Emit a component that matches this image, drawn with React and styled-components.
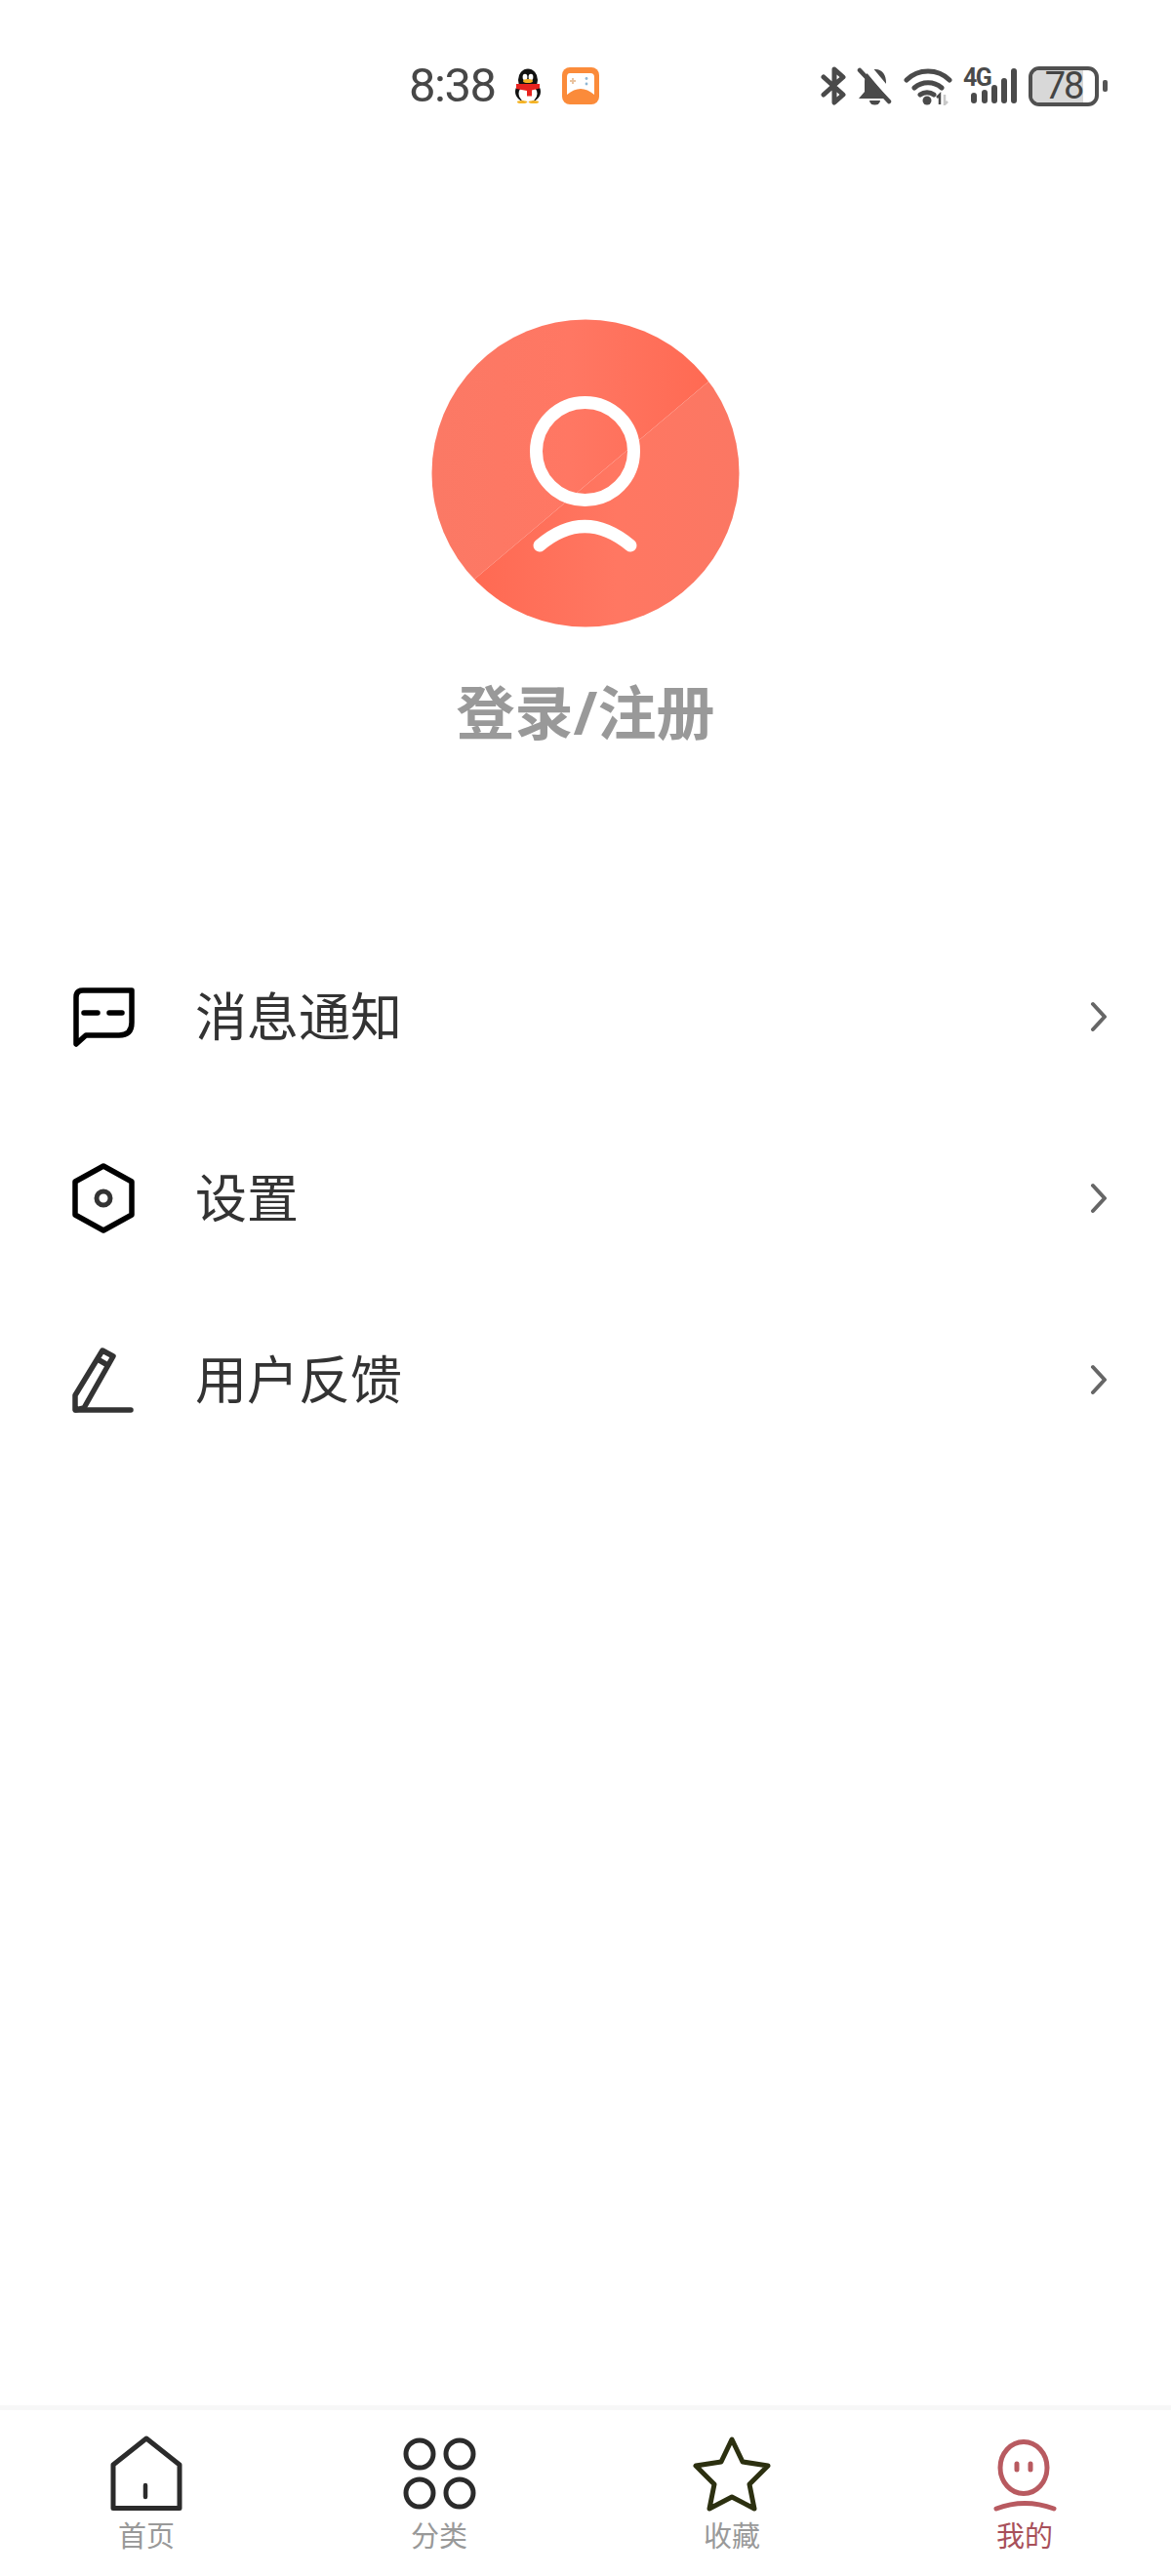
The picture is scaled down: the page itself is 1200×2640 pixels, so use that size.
import React from 'react';
import styled, { createGlobalStyle } from 'styled-components';

const GlobalStyle = createGlobalStyle`
  html, body {
    margin: 0;
    padding: 0;
    background: #ffffff;
  }
`;

const cjk = `'Noto Sans CJK SC', 'Noto Sans', sans-serif`;

const Page = styled.div`
  display: flex;
  flex-direction: column;
  width: 1200px;
  height: 2640px;
  overflow: hidden;
  background: #ffffff;
  font-family: ${cjk};
`;

const StatusBar = styled.div`
  display: flex;
  align-items: center;
  justify-content: space-between;
  box-sizing: border-box;
  height: 40px;
  margin-top: 68px;
  padding: 0 65px 0 419px;
`;

const StatusGroup = styled.div`
  display: flex;
  align-items: center;
`;

const Time = styled.span`
  font-family: Roboto, sans-serif;
  font-size: 49px;
  line-height: 40px;
  letter-spacing: -1.5px;
  color: #474747;
  margin-right: 18px;
`;

const StatusIcon = styled.svg`
  display: block;
  flex: none;
  margin-right: ${(p) => p.$gap || 0}px;
`;

const Battery = styled.div`
  position: relative;
  box-sizing: border-box;
  width: 72px;
  height: 41px;
  border: 4px solid #505050;
  border-radius: 11px;
  margin-right: 4px;
`;

const BatteryFill = styled.div`
  height: 100%;
  width: 82%;
  border-radius: 7px 0 0 7px;
  background: #d8d8d8;
`;

const BatteryLabel = styled.span`
  position: absolute;
  inset: -6px 0;
  display: flex;
  align-items: center;
  justify-content: center;
  font-family: Roboto, sans-serif;
  font-size: 38px;
  line-height: 45px;
  letter-spacing: -2px;
  color: #444444;
`;

const BatteryNub = styled.div`
  width: 5px;
  height: 12px;
  border-radius: 2px;
  background: #555555;
`;

const Profile = styled.div`
  display: flex;
  flex-direction: column;
  align-items: center;
  margin-top: 219px;
`;

const Title = styled.div`
  margin-top: 51px;
  font-family: 'Open Sans', ${cjk};
  font-size: 60px;
  line-height: 72px;
  font-weight: 700;
  color: #999999;
`;

const Menu = styled.div`
  display: flex;
  flex-direction: column;
  margin-top: 183px;
`;

const MenuRow = styled.div`
  display: flex;
  align-items: center;
  height: 186px;
  padding: 0 66px 0 72px;
`;

const MenuIcon = styled.svg`
  display: block;
  flex: none;
  width: 68px;
  height: 76px;
  margin-right: 60px;
`;

const MenuLabel = styled.span`
  flex: 1;
  font-size: 53px;
  line-height: 60px;
  color: #333333;
  margin-top: -6px;
`;

const Chevron = styled.svg`
  display: block;
  flex: none;
  width: 20px;
  height: 34px;
`;

const TabBar = styled.div`
  display: grid;
  grid-template-columns: repeat(4, 1fr);
  margin-top: auto;
  height: 175px;
  box-sizing: border-box;
  border-top: 5px solid #f7f7f7;
  padding-top: 25px;
`;

const Tab = styled.div`
  display: flex;
  flex-direction: column;
  align-items: center;
`;

const TabIcon = styled.svg`
  display: block;
  width: 84px;
  height: 80px;
`;

const TabLabel = styled.span`
  margin-top: 6px;
  font-size: 29px;
  line-height: 32px;
  color: ${(p) => (p.$active ? '#a8505a' : '#999999')};
`;

function Penguin() {
  return (
    <StatusIcon width="32" height="36" viewBox="0 0 32 36" $gap={19}>
      <ellipse cx="16" cy="24" rx="13" ry="11" fill="#111" />
      <ellipse cx="16" cy="12" rx="10" ry="11.5" fill="#111" />
      <ellipse cx="16" cy="26" rx="9.5" ry="9" fill="#fff" />
      <ellipse cx="13" cy="9" rx="2.4" ry="3.2" fill="#fff" />
      <ellipse cx="19" cy="9" rx="2.4" ry="3.2" fill="#fff" />
      <ellipse cx="16" cy="13" rx="5" ry="2" fill="#f5b324" />
      <path d="M4 16h24v4.5l-8 2v6h-5v-5.5L4 21z" fill="#e8231f" />
      <ellipse cx="10" cy="34.5" rx="5" ry="1.5" fill="#f5b324" />
      <ellipse cx="22" cy="34.5" rx="5" ry="1.5" fill="#f5b324" />
    </StatusIcon>
  );
}

function GameBadge() {
  return (
    <StatusIcon width="38" height="38" viewBox="0 0 38 38">
      <rect width="38" height="38" rx="8" fill="#fb8b3a" />
      <path d="M8 6H29q4 0 4 4V28q-7-6-14-6T5 28V10q0-4 3-4z" fill="#fff" />
      <path d="M8 14h6M11 11v6" stroke="#e9c3a0" strokeWidth="2" />
      <circle cx="25" cy="11.5" r="1.4" fill="#8fb7d6" />
      <circle cx="25" cy="17" r="1.4" fill="#8fb7d6" />
    </StatusIcon>
  );
}

function StatusIcons() {
  return (
    <StatusGroup>
      <StatusIcon width="26" height="40" viewBox="0 0 26 40" $gap={11}>
        <path d="M3 11l20 18-9 8V3l9 8L3 29" fill="none" stroke="#4a4a4a" strokeWidth="5" strokeLinecap="round" strokeLinejoin="round" />
      </StatusIcon>
      <StatusIcon width="37" height="40" viewBox="0 0 37 40" $gap={11}>
        <path d="M19 3c-8 0-11 7-11 13v10l-6 7h32l-4-7V16c0-6-3-13-11-13z" fill="#4a4a4a" />
        <path d="M13 35h11a5.5 4.5 0 0 1-11 0z" fill="#4a4a4a" />
        <path d="M9-1l30 36" stroke="#fff" strokeWidth="8" />
        <path d="M3 4l30 32" stroke="#4a4a4a" strokeWidth="4.5" strokeLinecap="round" />
      </StatusIcon>
      <StatusIcon width="50" height="40" viewBox="0 0 50 40" $gap={11}>
        <path d="M3 14c12-12 32-12 44 0M11 22c8-7 20-7 28 0M17 29c4-3 10-3 14 0" fill="none" stroke="#4a4a4a" strokeWidth="5" strokeLinecap="round" />
        <circle cx="24" cy="35" r="4.5" fill="#4a4a4a" />
        <path d="M37 39v-10l-3 3" fill="none" stroke="#4a4a4a" strokeWidth="2.5" />
        <path d="M42 29v10l3-3" fill="none" stroke="#c8c8c8" strokeWidth="2.5" />
      </StatusIcon>
      <StatusIcon width="56" height="62" viewBox="0 -12 56 62" $gap={11}>
        <text x="0" y="19" fontFamily="Roboto, sans-serif" fontSize="25" fontWeight="700" letterSpacing="-1.5" fill="#4a4a4a">4G</text>
        <path d="M11 29v5M22 26v8M32 21v13M42 14v20M52 4v30" fill="none" stroke="#4a4a4a" strokeWidth="6" strokeLinecap="round" />
      </StatusIcon>
      <Battery>
        <BatteryFill />
        <BatteryLabel>78</BatteryLabel>
      </Battery>
      <BatteryNub />
    </StatusGroup>
  );
}

function Avatar() {
  return (
    <svg width="316" height="316" viewBox="0 0 316 316" style={{ display: 'block' }}>
      <defs>
        <clipPath id="avatarClip">
          <circle cx="158" cy="158" r="157.5" />
        </clipPath>
        <linearGradient id="avatarTop" x1="0" x2="1" y1="0" y2="0">
          <stop offset="0" stopColor="#fb7965" />
          <stop offset="0.45" stopColor="#ff7763" />
          <stop offset="0.9" stopColor="#ff6a53" />
        </linearGradient>
        <linearGradient id="avatarBottom" x1="0" x2="1" y1="0" y2="0">
          <stop offset="0.15" stopColor="#ff6a53" />
          <stop offset="0.6" stopColor="#ff7762" />
          <stop offset="1" stopColor="#fb7763" />
        </linearGradient>
      </defs>
      <g clipPath="url(#avatarClip)">
        <path d="M0 0H316V37L0 304z" fill="url(#avatarTop)" />
        <path d="M0 304L316 37V316H0z" fill="url(#avatarBottom)" />
      </g>
      <circle cx="157.5" cy="135.5" r="50" fill="none" stroke="#fff" strokeWidth="13" />
      <path d="M111 232Q157 193 204 232" fill="none" stroke="#fff" strokeWidth="13" strokeLinecap="round" />
    </svg>
  );
}

function MessageIcon() {
  return (
    <MenuIcon viewBox="0 0 68 76">
      <path d="M6 66V18q0-7 7-7H63V44q0 13-13 13H16L6 66z" fill="none" stroke="#000" strokeWidth="5.5" strokeLinejoin="round" />
      <path d="M14 34H28M40 34H53" fill="none" stroke="#000" strokeWidth="5.5" strokeLinecap="round" />
    </MenuIcon>
  );
}

function HexIcon() {
  return (
    <MenuIcon viewBox="0 0 68 76">
      <path d="M34 5L63 21V55L34 71L5 55V21z" fill="none" stroke="#000" strokeWidth="5.5" strokeLinejoin="round" />
      <circle cx="34" cy="38" r="7" fill="none" stroke="#333" strokeWidth="5" />
    </MenuIcon>
  );
}

function PencilIcon() {
  return (
    <MenuIcon viewBox="0 0 68 76">
      <path d="M6 69H62" fill="none" stroke="#333" strokeWidth="5.5" strokeLinecap="round" />
      <path d="M5 69V54L33 8L44 14L14 67zM28 17L40 24" fill="none" stroke="#333" strokeWidth="5.5" strokeLinejoin="round" />
    </MenuIcon>
  );
}

function RightArrow() {
  return (
    <Chevron viewBox="0 0 20 34">
      <path d="M6 4L18 17L6 30" fill="none" stroke="#666" strokeWidth="4" strokeLinecap="round" strokeLinejoin="round" />
    </Chevron>
  );
}

const menuItems = [
  { label: '消息通知', Icon: MessageIcon },
  { label: '设置', Icon: HexIcon },
  { label: '用户反馈', Icon: PencilIcon },
];

function HomeTab() {
  return (
    <TabIcon viewBox="0 0 84 80">
      <path d="M42 4L76 31V75.5H8V31z" fill="none" stroke="#2b2b2b" strokeWidth="5" strokeLinejoin="round" />
      <path d="M41 52V64" fill="none" stroke="#2b2b2b" strokeWidth="4.5" strokeLinecap="round" />
    </TabIcon>
  );
}

function GridTab() {
  return (
    <TabIcon viewBox="0 0 84 80">
      <g fill="none" stroke="#2b2b2b" strokeWidth="5">
        <circle cx="22" cy="20" r="14" />
        <circle cx="63" cy="20" r="14" />
        <circle cx="22" cy="60" r="14" />
        <circle cx="63" cy="60" r="14" />
      </g>
    </TabIcon>
  );
}

function StarTab() {
  return (
    <TabIcon viewBox="0 0 84 80">
      <path d="M42 5L53 28L79 32L60 51L65 76L42 64L19 76L24 51L5 32L31 28z" fill="none" stroke="#2c3010" strokeWidth="5" strokeLinejoin="round" />
    </TabIcon>
  );
}

function FaceTab() {
  return (
    <TabIcon viewBox="0 0 84 80">
      <ellipse cx="41" cy="34" rx="24" ry="26.5" fill="none" stroke="#b85a60" strokeWidth="5" />
      <path d="M34 30V36M48 30V36" fill="none" stroke="#b85a60" strokeWidth="5" strokeLinecap="round" />
      <path d="M13 76Q42 65 72 76" fill="none" stroke="#b85a60" strokeWidth="5" strokeLinecap="round" />
    </TabIcon>
  );
}

const tabs = [
  { label: '首页', Icon: HomeTab },
  { label: '分类', Icon: GridTab },
  { label: '收藏', Icon: StarTab },
  { label: '我的', Icon: FaceTab, active: true },
];

export default function App() {
  return (
    <Page>
      <GlobalStyle />
      <StatusBar>
        <StatusGroup>
          <Time>8:38</Time>
          <Penguin />
          <GameBadge />
        </StatusGroup>
        <StatusIcons />
      </StatusBar>
      <Profile>
        <Avatar />
        <Title>登录/注册</Title>
      </Profile>
      <Menu>
        {menuItems.map(({ label, Icon }) => (
          <MenuRow key={label}>
            <Icon />
            <MenuLabel>{label}</MenuLabel>
            <RightArrow />
          </MenuRow>
        ))}
      </Menu>
      <TabBar>
        {tabs.map(({ label, Icon, active }) => (
          <Tab key={label}>
            <Icon />
            <TabLabel $active={active}>{label}</TabLabel>
          </Tab>
        ))}
      </TabBar>
    </Page>
  );
}
